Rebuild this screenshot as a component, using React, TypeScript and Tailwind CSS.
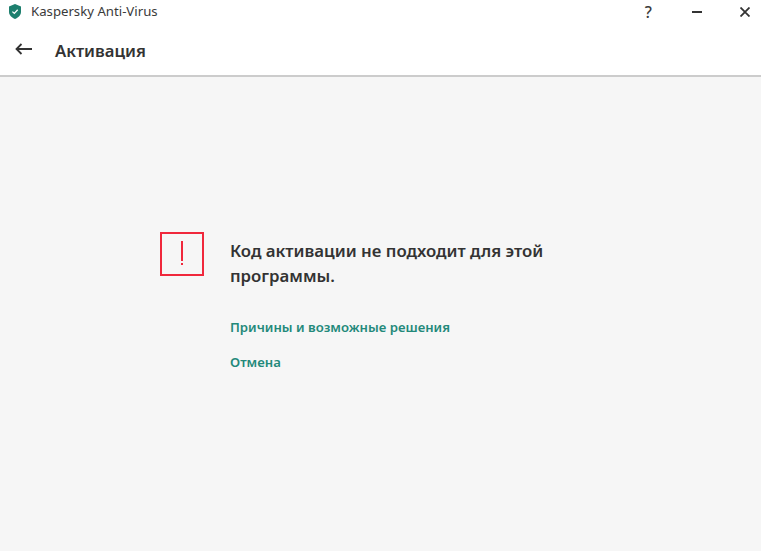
export default function App() {
  const font = "font-['Noto_Sans','Open_Sans',sans-serif]";
  return (
    <div className={`${font} flex h-[551px] w-[761px] flex-col overflow-hidden bg-[#f6f6f6]`}>
      <div className="h-[75px] bg-white">
        {/* title bar */}
        <div className="flex h-[23px] items-center pl-[9px]">
          <svg width="12" height="15" viewBox="0 0 12 15">
            <path d="M6 0 L12 2.4 V8 C12 11.2 9.2 13.6 6 15 C2.8 13.6 0 11.2 0 8 V2.4 Z" fill="#1d7f6e" />
            <path d="M3.4 7.6 L5.3 9.4 L8.7 5.8" fill="none" stroke="#fff" strokeWidth="1.3" />
          </svg>
          <span className="ml-[10px] text-[13.2px] leading-none text-[#3a3a3a]">Kaspersky Anti-Virus</span>
          <span className="ml-auto mr-[40px] text-[16px] font-medium leading-none text-[#3a3a3a]">?</span>
          <svg width="10" height="2" viewBox="0 0 10 2" className="mr-[38px]">
            <rect width="10" height="2" fill="#333" />
          </svg>
          <svg width="10" height="10" viewBox="0 0 10 10" className="mr-[11px]">
            <path d="M0.5 0.5 L9.5 9.5 M9.5 0.5 L0.5 9.5" stroke="#333" strokeWidth="1.8" />
          </svg>
        </div>
        {/* page header */}
        <div className="flex h-[52px] items-center pl-[15px] pt-[4px]">
          <svg width="17" height="12" viewBox="0 0 17 12" className="mb-[4px]">
            <path d="M17 6 H1.5 M6.5 1 L1.5 6 L6.5 11" fill="none" stroke="#333" strokeWidth="1.8" />
          </svg>
          <span className="ml-[23px] text-[16.7px] font-semibold leading-none text-[#333]">Активация</span>
        </div>
      </div>
      <div className="h-[2px] bg-[#cccccc]" />
      <div className="flex pl-[160px] pt-[155px]">
        <div className="flex h-[44px] w-[44px] flex-col items-center border-2 border-[#f0283c] pt-[7px]">
          <div className="h-[20px] w-[2px] bg-[#f0283c]" />
          <div className="mt-[2px] h-[2px] w-[2px] bg-[#f0283c]" />
        </div>
        <div className="ml-[26px] flex w-[340px] flex-col">
          <div className="mt-[6px] text-[16.8px] font-semibold leading-[25px] text-[#333]">
            Код активации не подходит для этой программы.
          </div>
          <div className="mt-[30px] text-[13.15px] font-semibold leading-[18px] text-[#23897a]">
            Причины и возможные решения
          </div>
          <div className="mt-[17px] text-[13.15px] font-semibold leading-[18px] text-[#23897a]">Отмена</div>
        </div>
      </div>
    </div>
  );
}
